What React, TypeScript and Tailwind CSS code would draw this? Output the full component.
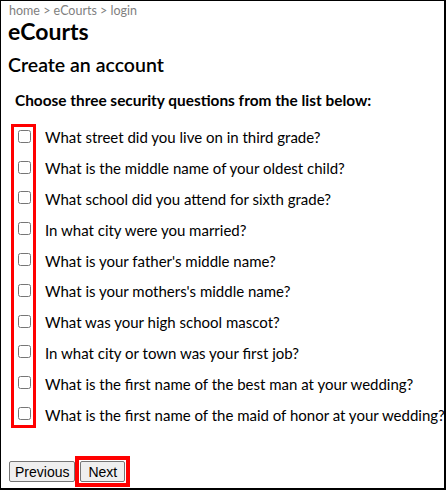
const questions = [
  "What street did you live on in third grade?",
  "What is the middle name of your oldest child?",
  "What school did you attend for sixth grade?",
  "In what city were you married?",
  "What is your father's middle name?",
  "What is your mothers's middle name?",
  "What was your high school mascot?",
  "In what city or town was your first job?",
  "What is the first name of the best man at your wedding?",
  "What is the first name of the maid of honor at your wedding?",
];

export default function App() {
  return (
    <div className="w-[446px] h-[490px] bg-white border-l border-t border-r-2 border-b-2 border-black font-['Lato',sans-serif] text-black overflow-hidden">
      <div className="pl-[8px] pt-[3px] text-[12.5px] leading-[14px] text-[#808080]">home &gt; eCourts &gt; login</div>
      <h1 className="pl-[7px] text-[23px] leading-[26px] font-bold">eCourts</h1>
      <h2 className="pl-[7px] mt-[9px] text-[19.5px] leading-[24px] font-semibold">Create an account</h2>
      <p className="pl-[14px] mt-[14px] text-[15.4px] leading-[18px] font-bold">Choose three security questions from the list below:</p>
      <div className="relative mt-[13px] pl-[12px]">
        <div className="absolute left-[10px] top-[2px] w-[25px] h-[304px] border-[3px] border-[#ff0000]" />
        <ul className="flex flex-col">
          {questions.map((q) => (
            <li key={q} className="flex items-center h-[30.8px] whitespace-nowrap">
              <input type="checkbox" className="w-[13px] h-[13px] ml-[5px] mr-[14px] shrink-0 -translate-y-[1px]" />
              <span className="text-[15px] leading-[18px]">{q}</span>
            </li>
          ))}
        </ul>
      </div>
      <div className="flex items-center pl-[8px] mt-[26px] font-['Liberation_Sans',Arial,sans-serif]">
        <button className="h-[21px] px-[5px] text-[14px] bg-[#efefef] border border-[#767676] rounded-[2px]">Previous</button>
        <div className="border-[4px] border-[#ff0000] p-[1px]">
          <button className="h-[21px] px-[7px] text-[14px] bg-[#efefef] border border-[#767676] rounded-[2px] block">Next</button>
        </div>
      </div>
    </div>
  );
}
